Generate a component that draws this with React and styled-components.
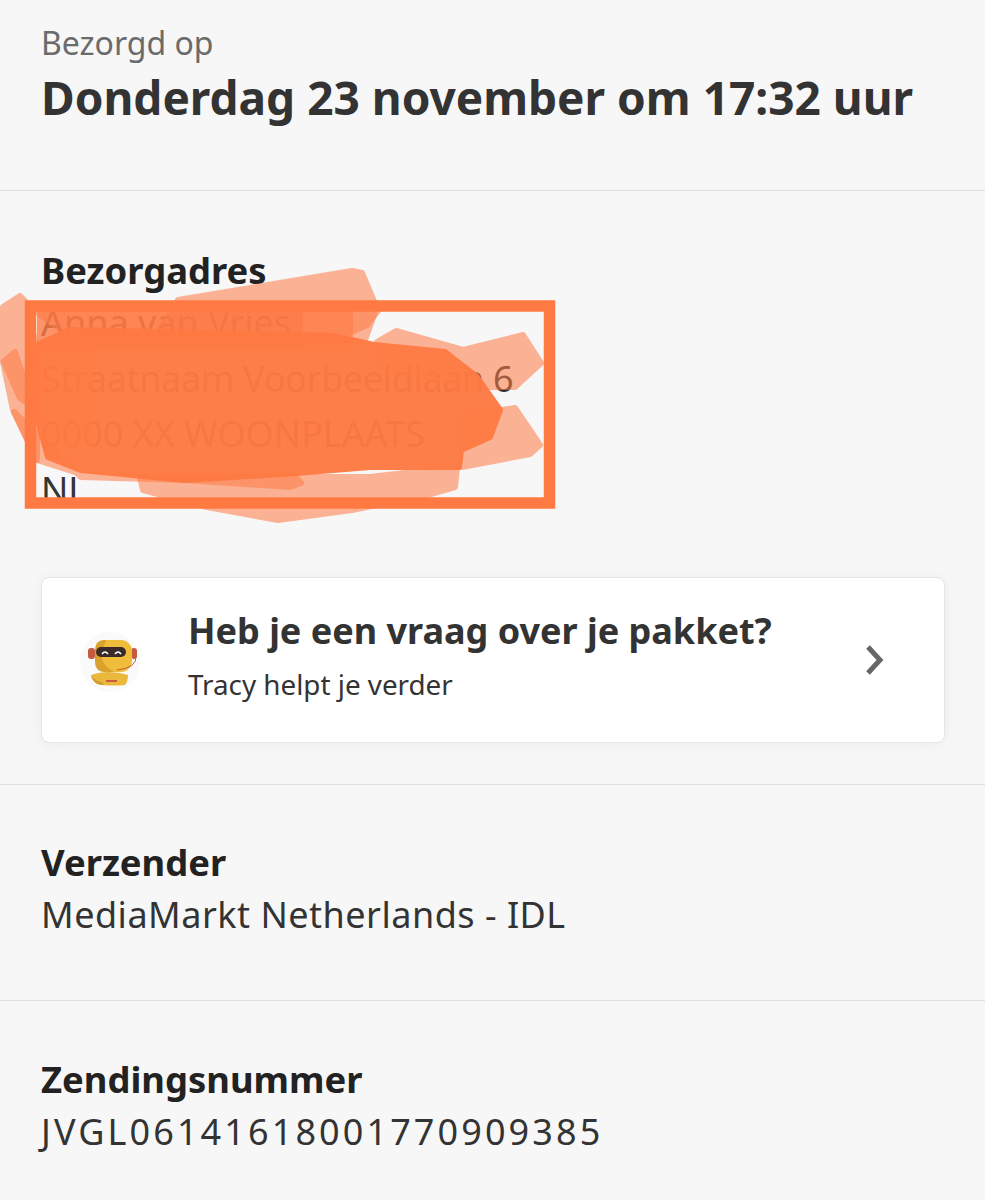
import styled, { createGlobalStyle } from "styled-components";

const GlobalStyle = createGlobalStyle`
  html, body { margin: 0; padding: 0; background: #f7f7f7; }
  body { font-family: "Noto Sans", "Open Sans", sans-serif; }
`;

const Page = styled.div`
  width: 985px;
  height: 1200px;
  overflow: hidden;
  background: #f7f7f7;
  color: #333;
`;

const Section = styled.section`
  height: ${(p) => p.$height}px;
  box-sizing: border-box;
  padding: ${(p) => p.$top}px 40px 0 41px;
  border-bottom: ${(p) => (p.$last ? "none" : "1px solid #dedede")};
`;

const Caption = styled.div`
  font-size: 32px;
  line-height: 40px;
  color: #6b6b6b;
`;

const DeliveredAt = styled.h1`
  margin: 4px 0 0;
  font-size: 46px;
  line-height: 60px;
  font-weight: 700;
  color: #333;
  white-space: nowrap;
`;

const Heading = styled.h2`
  margin: 0;
  font-size: 36.4px;
  line-height: 50px;
  font-weight: 700;
  color: #222;
`;

const Value = styled.div`
  font-size: 36px;
  line-height: 55.5px;
  letter-spacing: ${(p) => p.$spacing || 0}px;
  color: #333;
  white-space: nowrap;
`;

const Address = styled.div`
  position: relative;
  height: 222px;
`;

const Scribble = styled.svg`
  position: absolute;
  left: -41px;
  top: -5px;
  width: 600px;
  height: 260px;
  overflow: visible;
`;

const HelpCard = styled.a`
  display: flex;
  align-items: center;
  height: 166px;
  box-sizing: border-box;
  margin-top: 60px;
  padding: 0 60px 0 18px;
  background: #fff;
  border: 1px solid #e5e5e5;
  border-radius: 8px;
  box-shadow: 0 2px 14px rgba(0, 0, 0, 0.05);
`;

const CardText = styled.div`
  flex: 1;
  margin-left: 28px;
  padding-bottom: 11px;
`;

const CardTitle = styled.div`
  font-size: 36px;
  line-height: 46px;
  font-weight: 700;
  color: #333;
`;

const CardSub = styled.div`
  margin-top: 12px;
  font-size: 27.8px;
  line-height: 36px;
  color: #333;
`;

const Robot = () => (
  <svg width="100" height="100" viewBox="0 0 100 100">
    <circle cx="50" cy="52" r="30" fill="#fafafa" />
    <path d="M31 65q8 -3 18 -3t19 3q0 7 -3 10q-8 1 -24 0q-8 -2 -10 -10z" fill="#eab93b" />
    <path d="M31 65q4 6 11 7l2 3q-3 0 -7 -1q-5 -3 -6 -9z" fill="#d29c2a" />
    <rect x="28" y="38" width="7" height="11" rx="3" fill="#c65a3e" />
    <rect x="71" y="38" width="6" height="11" rx="3" fill="#c65a3e" />
    <rect x="35" y="30" width="37" height="32" rx="11" fill="#f0bd3a" />
    <path d="M46 30h-2q-9 0 -9 11v10q0 11 9 11h10q-14 -8 -12 -19z" fill="#d9a22d" />
    <rect x="36" y="37" width="30" height="10" rx="5" fill="#3b2a2a" />
    <path d="M42 44q3 -4 6 0M55 44q3 -4 6 0" stroke="#fff" strokeWidth="1.5" fill="none" />
    <path d="M76 46q1 12 -19 14" stroke="#c65a3e" strokeWidth="1" fill="none" />
    <rect x="46" y="70" width="11" height="2" fill="#c65a3e" />
  </svg>
);

const Chevron = () => (
  <svg width="20" height="32" viewBox="0 0 20 32">
    <path d="M4 3l12 13L4 29" stroke="#666" strokeWidth="5" fill="none" />
  </svg>
);

// coordinates are relative to the scribble svg, which starts at x=0 y=290
const lightStrokes = [
  "M3 17L20 6L26 12L37 60L37 120L20 108L3 70Z",
  "M3 72L15 62L37 127L37 170L13 120Z",
  "M178 10L352 -19L362 -17L378 21L367 35L345 45L160 40Z",
  "M377 52L396 41L463 60L523 45L541 73L515 97L474 97L383 78Z",
  "M462 126L515 118L540 155L530 164L462 177Z",
  "M140 187L300 187L370 187L457 177L455 197L427 205L352 220L278 230L207 217L143 200Z",
  "M14 122L37 170L81 184L293 184L301 193L290 197L185 190L81 187Z",
  "M37 22L375 22L365 50L74 50Z",
  "M40 22L350 24L350 58L40 58Z",
  "M40 22L300 24L300 58L40 58Z",
  "M37 60L90 60L90 150L48 165L37 127Z",
];

const coreStrokes = [
  "M70 40L333 46L374 55L445 62L476 86L500 120L490 147L461 160L459 177L370 177L296 183L185 190L81 180L48 167L37 127L37 55Z",
];

const Scrawl = () => (
  <Scribble viewBox="0 0 600 260">
    {lightStrokes.map((d) => (
      <path key={d} d={d} fill="#ff7a45" stroke="#ff7a45" strokeWidth="6" strokeLinejoin="round" opacity="0.55" />
    ))}
    {coreStrokes.map((d) => (
      <path key={d} d={d} fill="#ff7a42" stroke="#ff7a42" strokeWidth="6" strokeLinejoin="round" opacity="0.96" />
    ))}
    <rect x="30.5" y="16" width="519" height="197" fill="none" stroke="#ff7a42" strokeWidth="11.5" />
  </Scribble>
);

export default function App() {
  return (
    <Page>
      <GlobalStyle />
      <Section $height={191} $top={23}>
        <Caption>Bezorgd op</Caption>
        <DeliveredAt>Donderdag 23 november om 17:32 uur</DeliveredAt>
      </Section>
      <Section $height={594} $top={54}>
        <Heading>Bezorgadres</Heading>
        <Address>
          <Value>Anna van Vries</Value>
          <Value $spacing={-0.35}>Straatnaam Voorbeeldlaan 6</Value>
          <Value>0000 XX WOONPLAATS</Value>
          <Value>NL</Value>
          <Scrawl />
        </Address>
        <HelpCard>
          <Robot />
          <CardText>
            <CardTitle>Heb je een vraag over je pakket?</CardTitle>
            <CardSub>Tracy helpt je verder</CardSub>
          </CardText>
          <Chevron />
        </HelpCard>
      </Section>
      <Section $height={216} $top={52}>
        <Heading>Verzender</Heading>
        <Value $spacing={0.5}>MediaMarkt Netherlands - IDL</Value>
      </Section>
      <Section $height={199} $top={53} $last>
        <Heading>Zendingsnummer</Heading>
        <Value $spacing={3.1}>JVGL06141618001770909385</Value>
      </Section>
    </Page>
  );
}
